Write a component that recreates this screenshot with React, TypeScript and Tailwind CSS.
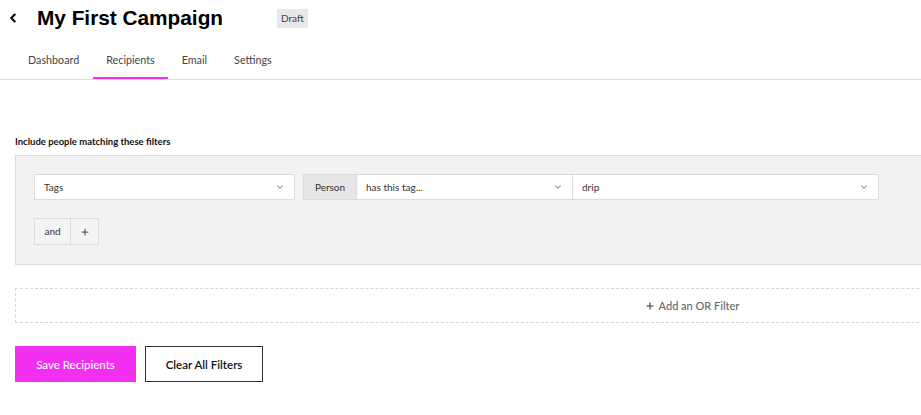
import { ChevronDown, ChevronLeft, Plus } from "lucide-react";

const tabs = ["Dashboard", "Recipients", "Email", "Settings"];

function Select({ label, className }: { label: string; className: string }) {
  return (
    <div className={`flex h-[26px] items-center justify-between border border-[#dcdcdc] bg-white pl-[9px] pr-[9px] ${className}`}>
      <span className="text-[10px] text-[#333]">{label}</span>
      <ChevronDown className="h-[10px] w-[10px] text-[#888]" strokeWidth={2.5} />
    </div>
  );
}

export default function App() {
  return (
    <div className="h-[415px] w-[921px] overflow-hidden bg-white font-['Lato',sans-serif] text-[#222]">
      <div className="w-[1400px]">
        {/* header */}
        <div className="flex h-[36px] items-center">
          <ChevronLeft className="ml-[6px] h-[14px] w-[14px] text-black" strokeWidth={3.5} />
          <h1 className="ml-[17px] font-['Liberation_Sans',Arial,sans-serif] text-[20.8px] font-bold text-black">
            My First Campaign
          </h1>
          <span className="ml-[54px] bg-[#e8e8e8] px-[4px] py-[2px] text-[10px] text-[#444]">Draft</span>
        </div>

        {/* tabs */}
        <div className="mt-[5px] flex border-b border-[#dddddd] pl-[14.5px]">
          {tabs.map((t) => (
            <div
              key={t}
              className={`px-[13.5px] pb-[9px] pt-[11px] text-[10.75px] text-[#444] ${
                t === "Recipients" ? "border-b-2 border-[#f22ef0]" : "border-b-2 border-transparent"
              }`}
            >
              {t}
            </div>
          ))}
        </div>

        <div className="px-[15px]">
          <p className="mt-[55px] text-[9.5px] font-bold text-[#111]">Include people matching these filters</p>

          {/* filter group */}
          <div className="mt-[6px] h-[110px] border border-[#dedede] bg-[#f2f2f2] px-[18px] pt-[18px]">
            <div className="flex items-center">
              <Select label="Tags" className="w-[261px]" />
              <div className="ml-[8px] flex">
                <div className="flex h-[26px] w-[54px] items-center justify-center border border-[#dcdcdc] bg-[#e6e6e6] text-[10px] text-[#333]">
                  Person
                </div>
                <Select label="has this tag..." className="w-[216px] border-l-0" />
                <Select label="drip" className="w-[306px] border-l-0" />
              </div>
            </div>
            <div className="mt-[18px] flex h-[27px] w-[65px] border border-[#dcdcdc] bg-[#f4f4f4]">
              <div className="flex w-[36px] items-center justify-center border-r border-[#dcdcdc] text-[10px] text-[#333]">and</div>
              <div className="flex flex-1 items-center justify-center">
                <Plus className="h-[10px] w-[10px] text-[#666]" strokeWidth={3} />
              </div>
            </div>
          </div>

          {/* OR filter */}
          <div className="mt-[23px] flex h-[35px] items-center justify-center border border-dashed border-[#d6d6d6] pr-[16px]">
            <Plus className="h-[10px] w-[10px] text-[#666]" strokeWidth={3.5} />
            <span className="ml-[4px] text-[11px] font-medium text-[#666]">Add an OR Filter</span>
          </div>

          {/* buttons */}
          <div className="mt-[23px] flex gap-[9px]">
            <button className="h-[36px] w-[121px] bg-[#f22ef0] text-[11.5px] font-medium text-white">Save Recipients</button>
            <button className="h-[36px] w-[118px] border border-[#333] bg-white text-[11.5px] font-semibold text-[#111]">Clear All Filters</button>
          </div>
        </div>
      </div>
    </div>
  );
}
